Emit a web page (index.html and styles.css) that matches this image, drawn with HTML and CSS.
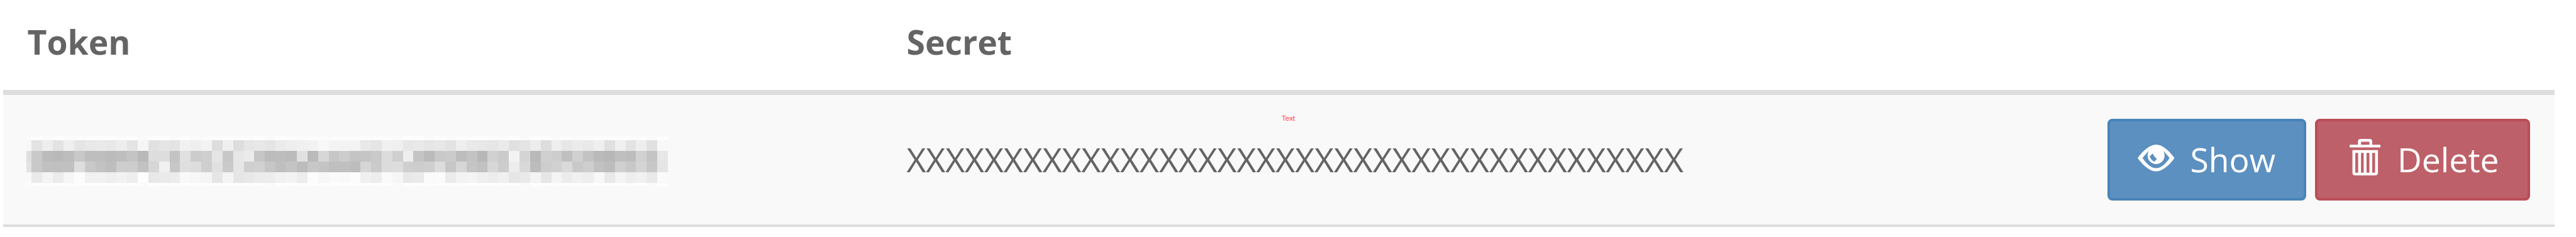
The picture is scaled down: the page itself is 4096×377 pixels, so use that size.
FILE: index.html
```html
<!DOCTYPE html>
<html lang="en">
<head>
<meta charset="utf-8">
<title>Tokens</title>
<link rel="stylesheet" href="styles.css">
</head>
<body>
<main class="table">
  <div class="row head">
    <div class="cell token">Token</div>
    <div class="cell secret">Secret</div>
  </div>
  <div class="row body">
    <div class="cell token"><div class="mosaic" id="mosaic"></div></div>
    <div class="cell secret">XXXXXXXXXXXXXXXXXXXXXXXXXXXXXXXXXXXXXXXX</div>
    <div class="actions">
      <button class="btn show">
        <svg class="eye" viewBox="297 246 230 167" preserveAspectRatio="none">
          <path fill="#fff" fill-rule="evenodd" d="M297 330C330 284 374 246 412 246S494 284 527 330C494 377 450 413 412 413S330 377 297 330ZM328 330C350 364 380 393 412 393S474 364 496 330C486 315 472 299 456 285A53 53 0 1 1 368 285C352 299 338 315 328 330Z"/>
          <path class="glint" d="M372 320L391 302Q399 322 417 335L401 353Q380 344 372 320Z"/>
        </svg>
        <span>Show</span>
      </button>
      <button class="btn delete">
        <svg class="trash" viewBox="296 417 174 228" preserveAspectRatio="none">
          <path fill="#fff" fill-rule="evenodd" d="M343 453V434Q343 417 359 417H407Q423 417 423 434V453H466Q470 453 470 457V466Q470 470 466 470H300Q296 470 296 466V457Q296 453 300 453ZM360 453H407V435H360ZM312 487H455V627Q455 645 439 645H328Q312 645 312 627ZM328 504V628H344V504ZM360 504V628H375V504ZM391 504V628H407V504ZM423 504V628H439V504Z"/>
        </svg>
        <span>Delete</span>
      </button>
    </div>
    <span class="note">Text</span>
  </div>
</main>
<script src="mosaic.js"></script>
</body>
</html>
```
FILE: styles.css
```css
:root { --u: 0.76389px; }
* { box-sizing: border-box; }
body {
  margin: 0;
  background: #fff;
  color: #646464;
  font-family: "Open Sans", sans-serif;
  font-size: calc(70 * var(--u));
  line-height: calc(100 * var(--u));
  overflow: hidden;
}
.table { margin-left: calc(7 * var(--u)); width: calc(5310 * var(--u)); }
.row { display: flex; align-items: center; }
.head {
  height: 151px;
  padding-bottom: calc(11 * var(--u));
  border-bottom: 8px solid #ddd;
  font-weight: 700;
}
.body {
  position: relative;
  height: 210px;
  padding-right: calc(50 * var(--u));
  background: #f9f9f9;
  border-bottom: 4px solid #ddd;
}
.cell { padding-left: calc(50 * var(--u)); }
.token { width: calc(1830 * var(--u)); flex: none; }
.mosaic {
  width: calc(1335 * var(--u));
  margin-left: calc(-2 * var(--u));
  margin-top: calc(7 * var(--u));
}
.strip { display: flex; height: calc(22.3 * var(--u)); }
.strip.faint { height: calc(7 * var(--u)); }
.strip i { flex: 2; }
.strip i:first-child { flex: 1; }
.actions { display: flex; gap: calc(18 * var(--u)); margin-left: auto; }
.btn {
  display: flex;
  align-items: flex-start;
  height: calc(170 * var(--u));
  margin: 0;
  border: 4px solid;
  border-radius: calc(10 * var(--u));
  color: #fff;
  font: inherit;
  white-space: nowrap;
}
.btn span { margin-top: calc(30 * var(--u)); }
.show {
  width: calc(414 * var(--u));
  padding: 0 0 0 calc(57 * var(--u));
  background: #5c90c0;
  border-color: #4884b8;
}
.delete {
  width: calc(448 * var(--u));
  padding: 0 0 0 calc(66 * var(--u));
  background: #be6069;
  border-color: #b94e58;
}
.eye {
  width: calc(76.7 * var(--u));
  height: calc(55.7 * var(--u));
  margin: calc(49 * var(--u)) calc(33 * var(--u)) 0 0;
  flex: none;
}
.glint { fill: #5c90c0; }
.trash {
  width: calc(64.6 * var(--u));
  height: calc(76 * var(--u));
  margin: calc(36 * var(--u)) calc(35.5 * var(--u)) 0 0;
  flex: none;
}
.note {
  position: absolute;
  left: calc(2668 * var(--u) - 7 * var(--u));
  top: calc(39 * var(--u));
  color: #ff4038;
  font: calc(15 * var(--u))/calc(20 * var(--u)) "Liberation Sans", Arial, sans-serif;
}
```
FILE: mosaic.js
```javascript
// Grey levels (hex pairs) of the pixelated token, one string per strip.
const faint = "fb" + "fdfbfdfbfcfdfdfdfcfdfafe".repeat(5);
const strips = [
  [faint, "faint"],
  ["f7e3eee3efe5e8eae8ede4f6e1e5e4f1eff3ddefdde6e8e5ebeef0f2f8f4f3f3e8e5f1efe7e9e5e7e3eee9e8e6eae0e4ecddeee7ebe9efe0f0e3eee1f8"],
  ["dfc9bbb9bdc8bebebbbec4b9ddddc3e0cccfe5c7e7ebc6bbbdbbe1bad7c7cdc4c5cadccfeec4bbc9cbbdc3b7d0cbf3d4b9d0cdc0d0c3bab7bfbdd1c4e7"],
  ["e3c9c1c0c0ddc9c2becdcdc2d6f0c7dfdccfe1cae6cfd1c6bfc4bcc7c4bfc0bdd6cbdcddcfcdcfdcc7d6c5c1d7ccecd9bccdd1dac9cec1bdd0c8d4c8e5"],
  ["f9eaf4ebf6fcf1f1eff2eefde8eaecf9f7f5e6f4e5e8ecedf1f3edfcf7faf9fcf0edfaf6e8eafafbebf3f4efedf0e6e9f4e6f4ecf1eef8e9f4eef1e9fa"],
  [faint, "faint"]
];

const mosaic = document.getElementById("mosaic");
for (const [levels, kind] of strips) {
  const strip = document.createElement("div");
  strip.className = "strip " + (kind || "");
  for (const g of levels.match(/../g)) {
    const cell = document.createElement("i");
    cell.style.background = "#" + g + g + g;
    strip.append(cell);
  }
  mosaic.append(strip);
}
```
